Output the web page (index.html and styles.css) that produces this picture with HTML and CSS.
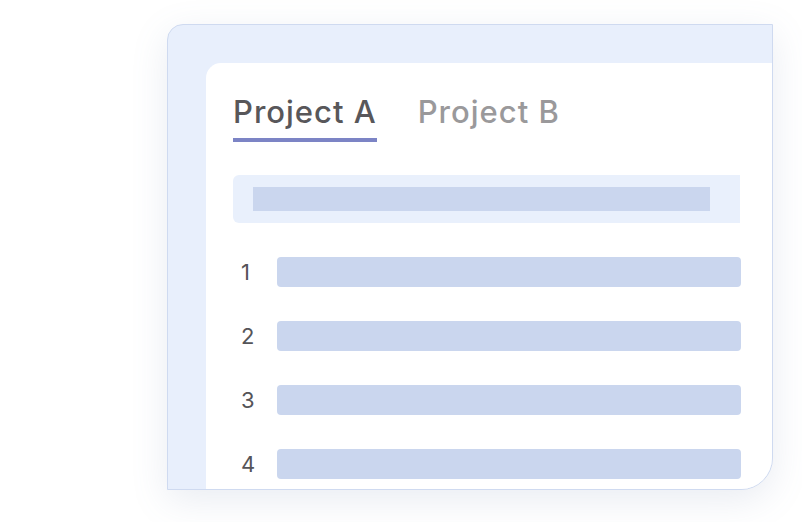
FILE: index.html
```html
<!DOCTYPE html>
<html lang="en">
<head>
<meta charset="utf-8">
<title>Projects</title>
<link rel="stylesheet" href="styles.css">
</head>
<body>
  <div class="frame">
    <div class="card">
      <div class="tabs">
        <div class="tab tab-active">Project A</div>
        <div class="tab">Project B</div>
      </div>
      <div class="search">
        <div class="search-fill"></div>
      </div>
      <div class="rows">
        <div class="row"><span class="num">1</span><div class="bar"></div></div>
        <div class="row"><span class="num">2</span><div class="bar"></div></div>
        <div class="row"><span class="num">3</span><div class="bar"></div></div>
        <div class="row"><span class="num">4</span><div class="bar"></div></div>
      </div>
    </div>
  </div>
</body>
</html>
```
FILE: styles.css
```css
html, body {
  margin: 0;
  padding: 0;
  background: #ffffff;
}
body {
  width: 802px;
  height: 522px;
  overflow: hidden;
  font-family: Inter, "Open Sans", sans-serif;
}
.frame {
  box-sizing: border-box;
  margin: 24px 0 0 167px;
  width: 606px;
  height: 466px;
  border: 1px solid #cfdaf0;
  border-radius: 16px 0 32px 0;
  background: #e8effc;
  padding: 38px 0 0 38px;
  overflow: hidden;
  box-shadow: 0 10px 36px rgba(110, 125, 170, 0.15);
  display: flex;
}
.card {
  flex: 1;
  background: #ffffff;
  border-radius: 15px 0 0 0;
  padding: 0 31px 0 27px;
  display: flex;
  flex-direction: column;
}
.tabs {
  display: flex;
  gap: 41px;
  padding-top: 31px;
}
.tab {
  font-size: 31px;
  line-height: 36px;
  font-weight: 500;
  color: #9a999b;
  padding-bottom: 8px;
  border-bottom: 4px solid transparent;
  letter-spacing: 1px;
}
.tab-active {
  color: #58575a;
  border-bottom-color: #7c84c5;
}
.search {
  margin-top: 33px;
  margin-right: 1px;
  height: 48px;
  box-sizing: border-box;
  padding: 12px 30px 12px 20px;
  background: #e9f0fc;
  border-radius: 6px 0 0 6px;
}
.search-fill {
  height: 24px;
  background: #cad6ee;
}
.rows {
  margin-top: 34px;
  display: flex;
  flex-direction: column;
  gap: 34px;
}
.row {
  display: flex;
  align-items: center;
  height: 30px;
}
.num {
  width: 32px;
  margin-right: 12px;
  text-align: left;
  padding-left: 8px;
  box-sizing: border-box;
  font-size: 22px;
  font-weight: 400;
  color: #555458;
}
.bar {
  flex: 1;
  height: 30px;
  background: #cad6ee;
  border-radius: 4px;
}
```
